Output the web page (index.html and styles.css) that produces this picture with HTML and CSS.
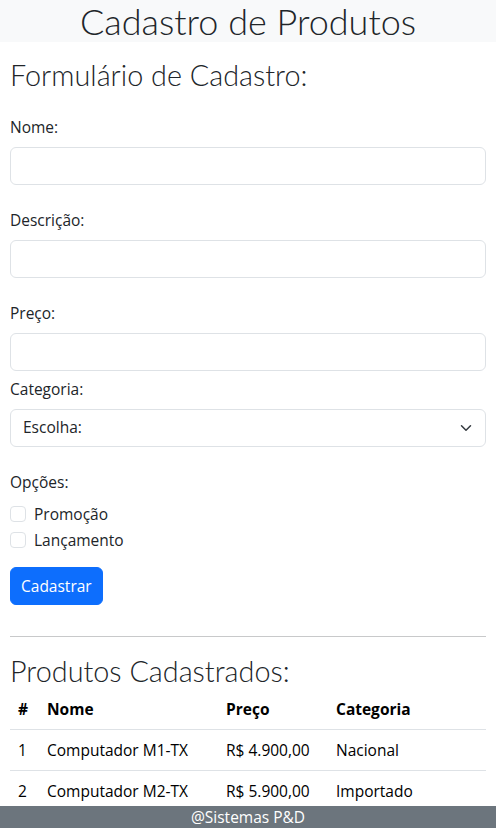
FILE: index.html
```html
<!DOCTYPE html>
<html lang="pt-BR">
<head>
<meta charset="utf-8">
<title>Cadastro de Produtos</title>
<link rel="stylesheet" href="styles.css">
</head>
<body>
<header class="topbar">
  <h1 class="title">Cadastro de Produtos</h1>
</header>
<main class="container">
  <h2 class="section-title">Formulário de Cadastro:</h2>
  <form class="form">
    <div class="field">
      <label class="form-label" for="nome">Nome:</label>
      <input class="form-control" id="nome" type="text">
    </div>
    <div class="field">
      <label class="form-label" for="desc">Descrição:</label>
      <input class="form-control" id="desc" type="text">
    </div>
    <div class="field field-tight">
      <label class="form-label" for="preco">Preço:</label>
      <input class="form-control" id="preco" type="text">
    </div>
    <div class="field">
      <label class="form-label" for="cat">Categoria:</label>
      <div class="select-wrap">
        <select class="form-select" id="cat">
          <option>Escolha:</option>
        </select>
        <svg class="chevron" viewBox="0 0 16 16" width="16" height="12" aria-hidden="true"><path d="m2 5 6 6 6-6" fill="none" stroke="#343a40" stroke-width="2" stroke-linecap="round" stroke-linejoin="round"/></svg>
      </div>
    </div>
    <div class="options">
      <span class="form-label">Opções:</span>
      <label class="form-check"><input class="check-input" type="checkbox"><span>Promoção</span></label>
      <label class="form-check"><input class="check-input" type="checkbox"><span>Lançamento</span></label>
    </div>
    <button class="btn-primary" type="button">Cadastrar</button>
  </form>
  <hr class="divider">
  <h2 class="section-title list-title">Produtos Cadastrados:</h2>
  <table class="table">
    <colgroup>
      <col class="c1"><col class="c2"><col class="c3"><col class="c4">
    </colgroup>
    <thead>
      <tr><th>#</th><th>Nome</th><th>Preço</th><th>Categoria</th></tr>
    </thead>
    <tbody>
      <tr><td>1</td><td>Computador M1-TX</td><td>R$ 4.900,00</td><td>Nacional</td></tr>
      <tr><td>2</td><td>Computador M2-TX</td><td>R$ 5.900,00</td><td>Importado</td></tr>
    </tbody>
  </table>
</main>
<footer class="footer">@Sistemas P&amp;D</footer>
</body>
</html>
```
FILE: styles.css
```css
* { box-sizing: border-box; }
html, body { margin: 0; padding: 0; }
body {
  font-family: "Open Sans", "Liberation Sans", sans-serif;
  font-size: 15.5px;
  line-height: 1.5;
  color: #212529;
  background: #fff;
  height: 828px;
  overflow: hidden;
}
.topbar {
  background: #f8f9fa;
  height: 42px;
  display: flex;
  align-items: center;
  justify-content: center;
}
.title {
  margin: 0;
  font-family: Lato, "Open Sans", sans-serif;
  font-size: 36px;
  font-weight: 300;
  line-height: 42px;
  color: #212529;
}
.container { padding: 0 10px; }
.section-title {
  margin: 16px 0 0;
  font-family: Lato, "Open Sans", sans-serif;
  font-size: 28.8px;
  font-weight: 300;
  line-height: 35px;
}
.form { margin-top: 22px; }
.field { margin-bottom: 23px; }
.field-tight { margin-bottom: 6px; }
.form-label {
  display: block;
  margin-bottom: 8px;
  line-height: 24px;
}
.form-control, .form-select {
  display: block;
  width: 100%;
  height: 38px;
  padding: 6px 12px;
  font: inherit;
  color: #212529;
  background: #fff;
  border: 1px solid #dee2e6;
  border-radius: 6px;
  outline: none;
}
.select-wrap { position: relative; }
.form-select {
  appearance: none;
  -webkit-appearance: none;
  padding-right: 36px;
}
.chevron {
  position: absolute;
  right: 12px;
  top: 13px;
  pointer-events: none;
}
.options { margin-bottom: 15px; }
.form-check {
  display: flex;
  align-items: flex-start;
  min-height: 24px;
  margin-bottom: 2px;
  line-height: 24px;
}
.check-input {
  appearance: none;
  -webkit-appearance: none;
  width: 16px;
  height: 16px;
  margin: 4px 8px 0 0;
  border: 1px solid #dee2e6;
  border-radius: 4px;
  background: #fff;
  flex: none;
}
.btn-primary {
  display: block;
  height: 38px;
  padding: 0 10px;
  font: inherit;
  line-height: 36px;
  color: #fff;
  background: #0d6efd;
  border: 1px solid #0d6efd;
  border-radius: 6px;
}
.divider {
  margin: 31px 0 0;
  border: 0;
  border-top: 1px solid #c8c9ca;
  height: 0;
}
.list-title { margin-top: 17px; }
.table {
  width: 100%;
  border-collapse: collapse;
  table-layout: fixed;
  color: #000;
}
.c1 { width: 29px; }
.c2 { width: 179px; }
.c3 { width: 110px; }
.c4 { width: auto; }
.table th, .table td {
  padding: 8px;
  text-align: left;
  line-height: 24px;
  border-bottom: 1px solid #dee2e6;
  white-space: nowrap;
}
.table th { font-weight: 700; }
.footer {
  position: fixed;
  left: 0;
  right: 0;
  bottom: 0;
  height: 22px;
  line-height: 22px;
  background: #6c757d;
  color: #fff;
  text-align: center;
}
```
